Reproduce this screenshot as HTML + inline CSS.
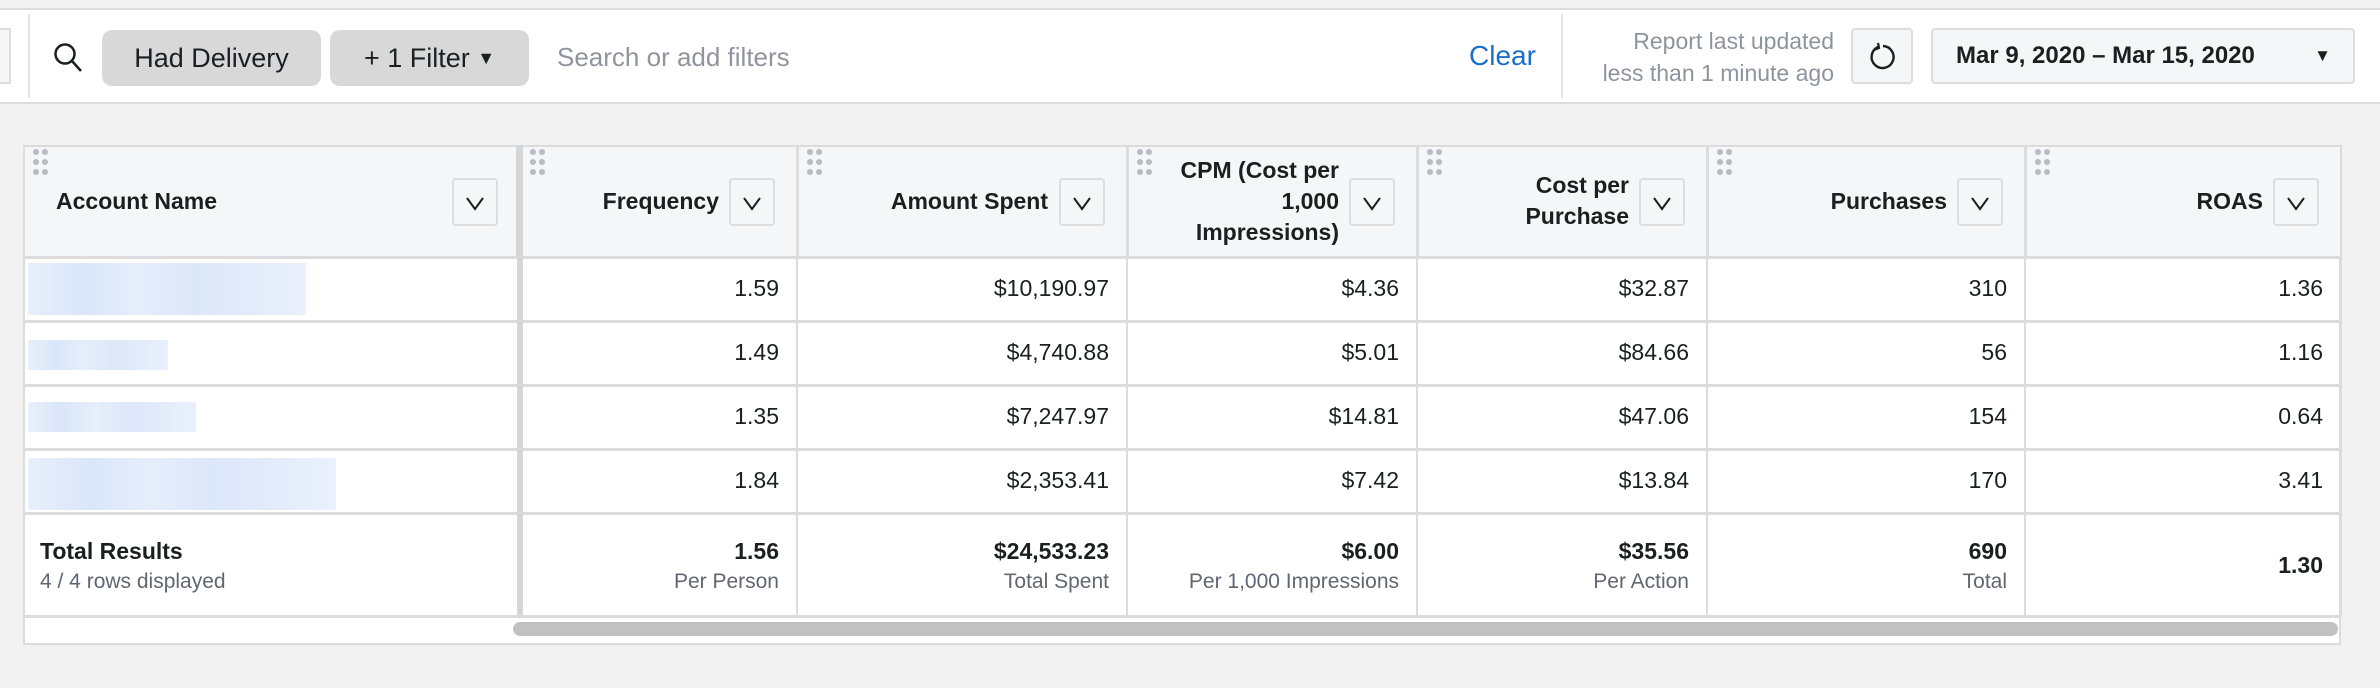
<!DOCTYPE html>
<html><head><meta charset="utf-8"><style>
*{box-sizing:border-box;margin:0;padding:0}
body{width:2380px;height:688px;background:#f2f2f2;font-family:"Liberation Sans",Arial,sans-serif;position:relative;overflow:hidden;color:#1c1e21}
.abs{position:absolute}
.top{left:0;width:2380px;background:#fff;border-top:2px solid #ddd;border-bottom:2px solid #ddd;top:8px;height:96px}
.pill{background:#d8d8d8;border-radius:10px;height:56px;top:30px;font-size:27px;line-height:56px;text-align:center;color:#1c1e21}
.tbl{left:23px;top:145px;width:2318px;height:500px;background:#fff;border:2px solid #dcdcdc}
.hd{background:#f5f6f7;top:0;height:112px;border-right:2px solid #dcdcdc;border-bottom:3px solid #dcdcdc}
.ht{position:absolute;font-weight:bold;font-size:23px;text-align:right;line-height:31px;white-space:nowrap}
.btn{position:absolute;width:46px;height:48px;top:178px;border:2px solid #ddd;border-radius:4px;background:#f5f6f7}
.btn svg{position:absolute;left:10px;top:12px}
.cell{position:absolute;font-size:23px;text-align:right}
.hl{position:absolute;height:3px;background:#dcdcdc}
.vl{position:absolute;width:2px;background:#dcdcdc}
.sub{font-size:21px;color:#606770}
</style></head><body>
<div class="abs top"></div>
<div class="abs" style="left:0;top:28px;width:11px;height:56px;border:2px solid #ddd;border-left:none;background:#f5f6f7"></div>
<div class="abs" style="left:28px;top:14px;width:2px;height:84px;background:#e4e4e4"></div>
<svg class="abs" style="left:52px;top:42px" width="34" height="32" viewBox="0 0 34 32"><circle cx="13" cy="12" r="9.5" fill="none" stroke="#1c1e21" stroke-width="2.5"/><line x1="20" y1="19" x2="29" y2="29" stroke="#1c1e21" stroke-width="2.5"/></svg>
<div class="abs pill" style="left:102px;width:219px">Had Delivery</div>
<div class="abs pill" style="left:330px;width:199px">+ 1 Filter <span style="font-size:18px;position:relative;top:-3px">&#9660;</span></div>
<div class="abs" style="left:557px;top:42px;font-size:26px;color:#90949c">Search or add filters</div>
<div class="abs" style="left:1469px;top:40px;font-size:28px;color:#1b6ecb">Clear</div>
<div class="abs" style="left:1561px;top:14px;width:2px;height:84px;background:#e4e4e4"></div>
<div class="abs" style="left:1500px;width:334px;top:25px;font-size:23px;color:#8d949e;text-align:right;line-height:32px">Report last updated<br>less than 1 minute ago</div>
<div class="abs" style="left:1851px;top:28px;width:62px;height:56px;border:2px solid #ddd;border-radius:4px;background:#f5f6f7"></div>
<svg class="abs" style="left:1866px;top:41px" width="32" height="32" viewBox="0 0 32 32"><path d="M12 6 A11 11 0 1 0 17 5" fill="none" stroke="#1c1e21" stroke-width="2.4"/><path d="M12 2 L13 7 L8 9" fill="none" stroke="#1c1e21" stroke-width="2.2"/></svg>
<div class="abs" style="left:1931px;top:28px;width:424px;height:56px;border:2px solid #ddd;border-radius:4px;background:#f5f6f7;font-size:24px;font-weight:bold;line-height:52px;padding-left:23px;color:#1c1e21">Mar 9, 2020 – Mar 15, 2020<span style="position:absolute;right:22px;font-size:17px">&#9660;</span></div>

<div class="abs tbl">
 <div class="abs hd" style="left:0;width:497px;border-right:6px solid #d6d6d6"></div>
 <div class="abs hd" style="left:497px;width:277px"></div>
 <div class="abs hd" style="left:774px;width:330px"></div>
 <div class="abs hd" style="left:1104px;width:290px"></div>
 <div class="abs hd" style="left:1394px;width:290px"></div>
 <div class="abs hd" style="left:1684px;width:318px"></div>
 <div class="abs hd" style="left:2002px;width:314px;border-right:none"></div>
</div>

<div class="ht" style="left:56px;top:186px;text-align:left">Account Name</div>
<div class="ht" style="right:1661px;top:186px">Frequency</div>
<div class="ht" style="right:1332px;top:186px">Amount Spent</div>
<div class="ht" style="right:1041px;top:155px">CPM (Cost per<br>1,000<br>Impressions)</div>
<div class="ht" style="right:751px;top:170px">Cost per<br>Purchase</div>
<div class="ht" style="right:433px;top:186px">Purchases</div>
<div class="ht" style="right:117px;top:186px">ROAS</div>

<div id="t"></div>
<script>
var cols=[[23,520],[520,797],[797,1127],[1127,1417],[1417,1707],[1707,2025],[2025,2341]];
var h='';
var dots='<svg width="18" height="28"><g fill="#b8bcc2"><circle cx="4" cy="4" r="3"/><circle cx="13" cy="4" r="3"/><circle cx="4" cy="14" r="3"/><circle cx="13" cy="14" r="3"/><circle cx="4" cy="24" r="3"/><circle cx="13" cy="24" r="3"/></g></svg>';
var chev='<svg width="22" height="22"><path d="M3 6 L11 17 L19 6" fill="none" stroke="#1c1e21" stroke-width="2"/></svg>';
for(var i=0;i<7;i++){var L=cols[i][0],R=cols[i][1];
 h+='<div class="abs" style="left:'+(L+9)+'px;top:148px">'+dots+'</div>';
 h+='<div class="btn" style="left:'+(R-68)+'px">'+chev+'</div>';
}
var data=[['1.59','$10,190.97','$4.36','$32.87','310','1.36'],['1.49','$4,740.88','$5.01','$84.66','56','1.16'],['1.35','$7,247.97','$14.81','$47.06','154','0.64'],['1.84','$2,353.41','$7.42','$13.84','170','3.41']];
var rowT=[257,321,385,449],rowB=[321,385,449,513];
for(var r=0;r<4;r++){
 h+='<div class="hl" style="left:23px;width:2318px;top:'+(rowB[r]-1)+'px"></div>';
 for(var c=0;c<6;c++){var R=cols[c+1][1];
  h+='<div class="cell" style="right:'+(2380-R+18)+'px;top:'+(rowT[r]+18)+'px">'+data[r][c]+'</div>';}
}
for(var i=1;i<7;i++){h+='<div class="vl" style="left:'+(cols[i][1]-1)+'px;top:145px;height:472px"></div>';}
h+='<div class="abs" style="left:517px;top:145px;width:6px;height:472px;background:#d6d6d6"></div>';
var bl=[[28,263,278,52],[28,340,140,30],[28,402,168,30],[28,458,308,52]];
bl.forEach(function(b){h+='<div class="abs" style="left:'+b[0]+'px;top:'+b[1]+'px;width:'+b[2]+'px;height:'+b[3]+'px;background:linear-gradient(90deg,#e8effb,#dae6f9 20%,#e6eefb 40%,#dce7f9 60%,#eaf0fc)"></div>';});
h+='<div class="abs" style="left:40px;top:538px;font-size:23px;font-weight:bold">Total Results</div>';
h+='<div class="abs sub" style="left:40px;top:570px">4 / 4 rows displayed</div>';
var tot=[['1.56','Per Person'],['$24,533.23','Total Spent'],['$6.00','Per 1,000 Impressions'],['$35.56','Per Action'],['690','Total']];
for(var c=0;c<5;c++){var R=cols[c+1][1];
 h+='<div class="cell" style="right:'+(2380-R+18)+'px;top:538px;font-weight:bold">'+tot[c][0]+'</div>';
 h+='<div class="cell sub" style="right:'+(2380-R+18)+'px;top:570px">'+tot[c][1]+'</div>';}
h+='<div class="cell" style="right:57px;top:552px;font-weight:bold">1.30</div>';
h+='<div class="hl" style="left:23px;width:2318px;top:615px"></div>';
h+='<div class="abs" style="left:513px;top:622px;width:1825px;height:14px;border-radius:7px;background:#c1c1c1"></div>';
document.getElementById('t').innerHTML=h;
</script>
</body></html>
